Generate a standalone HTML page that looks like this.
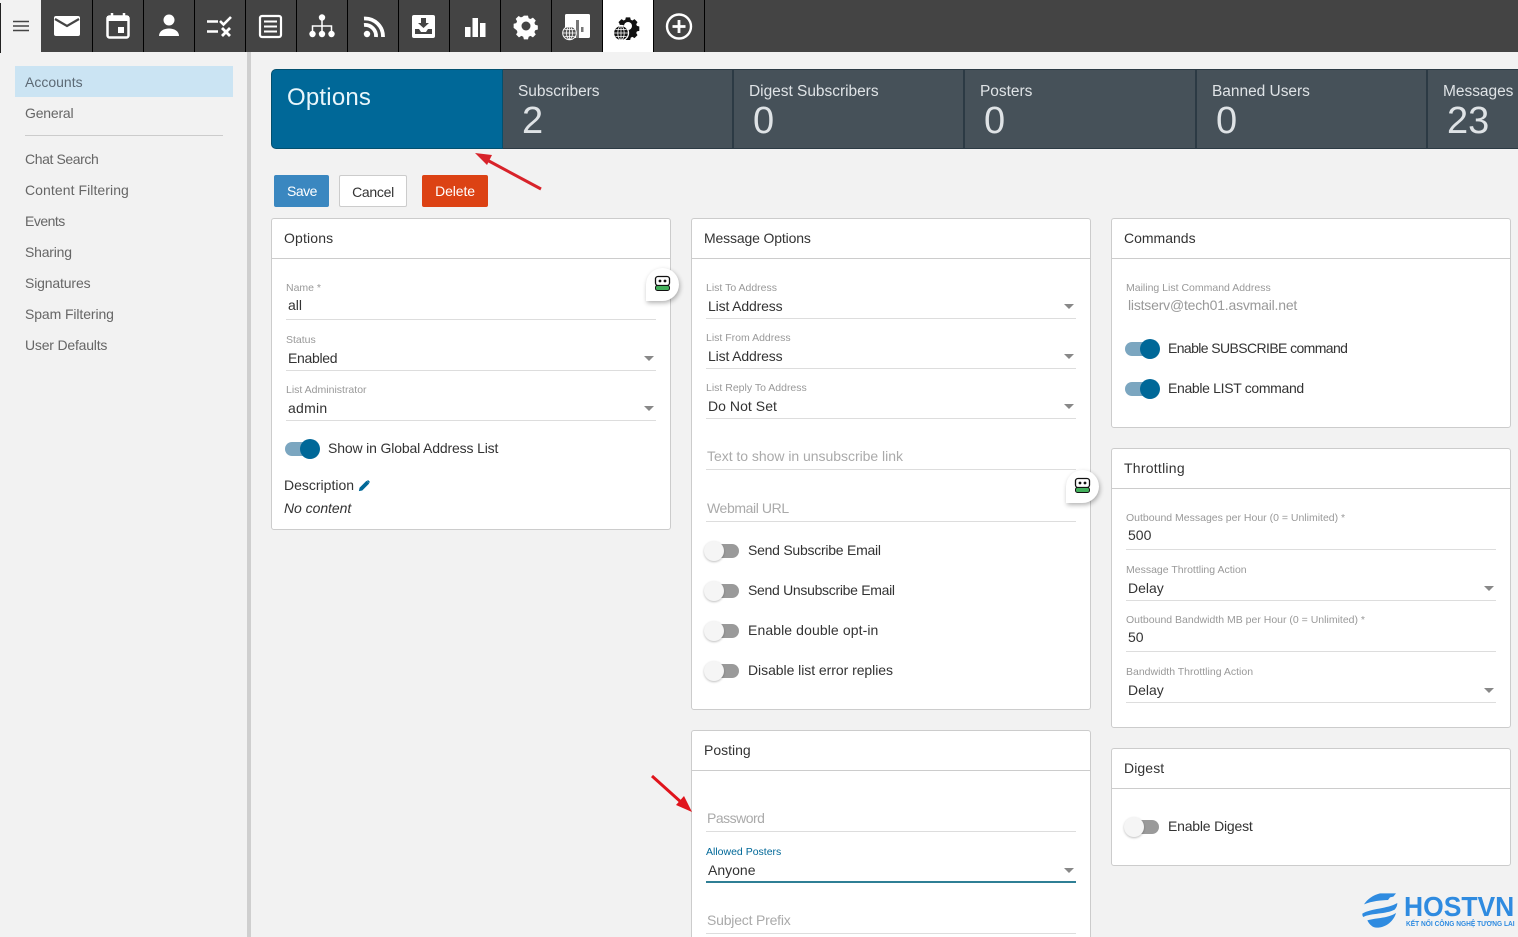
<!DOCTYPE html>
<html><head><meta charset="utf-8"><title>Options</title>
<style>
html,body{margin:0;padding:0;width:1518px;height:937px;overflow:hidden}
body{position:relative;background:#f2f2f2;font-family:"Liberation Sans",sans-serif;font-size:14px;color:#333}
#w{position:absolute;left:0;top:0;width:1518px;height:937px;overflow:hidden}
.a{position:absolute}
.t{position:absolute;white-space:nowrap;line-height:20px}
.nc{position:absolute;top:0;width:50px;height:52px;border-right:1px solid #000}
.nc svg{position:absolute;left:8px;top:9px}
.side{color:#666}
.tile{position:absolute;top:69px;height:78px;background:#465159;border:1px solid #2c3a44;border-width:1px 2px 1px 0}
.tl{position:absolute;left:15px;top:12px;font-size:15.500px;line-height:20px;color:#dfe3e6;white-space:nowrap;letter-spacing:-.03px}
.tn{position:absolute;left:19px;top:29px;font-size:38px;line-height:44px;color:#dfe3e6;white-space:nowrap}
.card{position:absolute;background:#fff;border:1px solid #ccc;border-radius:3px;box-sizing:border-box}
.ch{position:absolute;left:0;right:0;top:0;height:40px;border-bottom:1px solid #ccc;box-sizing:border-box}
.lb{position:absolute;font-size:10.500px;line-height:14px;color:#999;white-space:nowrap}
.v{position:absolute;line-height:20px;white-space:nowrap;color:#333}
.ph{position:absolute;line-height:20px;white-space:nowrap;color:#aaa}
.ln{position:absolute;height:1px;background:#ddd}
.ar{position:absolute;width:0;height:0;border-left:5.500px solid transparent;border-right:5.500px solid transparent;border-top:5px solid #888}
.tg{position:absolute;width:34px;height:14px;border-radius:7px}
.tg i{position:absolute;top:-3px;width:20px;height:20px;border-radius:50%}
.on{background:#7ba6c0}.on i{left:15px;background:#006898}
.off{background:#9a9a9a}.off i{left:-1px;background:#f5f5f5;box-shadow:0 1px 2px rgba(0,0,0,.25)}
.bot{position:absolute;width:33px;height:33px;background:#fff;border-radius:50% 50% 50% 0;box-shadow:1px 2px 5px rgba(0,0,0,.3)}
.btn{position:absolute;top:175px;height:32px;line-height:32px;text-align:center;border-radius:2px;box-sizing:border-box}
</style></head><body><div id="w">

<!-- top nav -->
<div class="a" style="left:0;top:0;width:1518px;height:52px;background:#444"></div>
<div class="a" style="left:0;top:0;width:41px;height:52px;background:#f2f2f2"></div>
<div class="a" style="left:0;top:3px;width:1px;height:50px;background:#222"></div>
<svg class="a" style="left:13px;top:20px" width="16" height="12"><path d="M0 1.500h16M0 6h16M0 10.500h16" stroke="#444" stroke-width="1.600"/></svg>
<div class="nc" style="left:42px"><svg width="34" height="34" viewBox="0 0 34 34"><rect x="4" y="7" width="26" height="20" rx="2" fill="#fff"/><path d="M5 10l12 7 12-7" fill="none" stroke="#444" stroke-width="2.200"/></svg></div>
<div class="nc" style="left:93px"><svg width="34" height="34" viewBox="0 0 34 34"><rect x="6.500" y="7.500" width="21" height="21" rx="2" fill="none" stroke="#fff" stroke-width="2.500"/><rect x="6" y="7" width="22" height="5" fill="#fff"/><path d="M11 4v5M23 4v5" stroke="#fff" stroke-width="2.500"/><rect x="17" y="18" width="6" height="6" fill="#fff"/></svg></div>
<div class="nc" style="left:144px"><svg width="34" height="34" viewBox="0 0 34 34"><circle cx="17" cy="11" r="5.500" fill="#fff"/><path d="M7 27c0-5 5-7.500 10-7.500S27 22 27 27z" fill="#fff"/></svg></div>
<div class="nc" style="left:195px"><svg width="34" height="34" viewBox="0 0 34 34"><path d="M4 12.500h11M4 22.500h11" stroke="#fff" stroke-width="2.400"/><path d="M17 12l3.500 3.500L28 8" fill="none" stroke="#fff" stroke-width="2.600"/><path d="M19 19l8 8M27 19l-8 8" stroke="#fff" stroke-width="2.800"/></svg></div>
<div class="nc" style="left:246px"><svg width="34" height="34" viewBox="0 0 34 34"><rect x="6" y="7" width="21" height="21" rx="2" fill="none" stroke="#fff" stroke-width="2.200"/><path d="M10 12.500h13M10 17.500h13M10 22.500h13" stroke="#fff" stroke-width="2"/></svg></div>
<div class="nc" style="left:297px"><svg width="34" height="34" viewBox="0 0 34 34"><circle cx="17" cy="8.500" r="3.200" fill="#fff"/><path d="M17 11v6M7.500 22v-5h19v5M17 17v5" fill="none" stroke="#fff" stroke-width="1.500"/><circle cx="7.500" cy="25" r="3.200" fill="#fff"/><circle cx="17" cy="25" r="3.200" fill="#fff"/><circle cx="26.500" cy="25" r="3.200" fill="#fff"/></svg></div>
<div class="nc" style="left:348px"><svg width="34" height="34" viewBox="0 0 34 34"><circle cx="11" cy="25" r="3.200" fill="#fff"/><path d="M8 16a11 11 0 0 1 12 12" fill="none" stroke="#fff" stroke-width="3.800"/><path d="M8 9.500a18 18 0 0 1 19 18.500" fill="none" stroke="#fff" stroke-width="3.800"/></svg></div>
<div class="nc" style="left:399px"><svg width="34" height="34" viewBox="0 0 34 34"><rect x="5" y="6" width="23" height="23" rx="2" fill="#fff"/><path d="M8 20h4l2 3h5l2-3h4v5H8z" fill="#444"/><path d="M14 9h5v5h3l-5.500 5-5.500-5h3z" fill="#444"/></svg></div>
<div class="nc" style="left:450px"><svg width="34" height="34" viewBox="0 0 34 34"><rect x="7" y="18" width="5.500" height="10" fill="#fff"/><rect x="14.500" y="9" width="5.500" height="19" fill="#fff"/><rect x="22" y="14" width="5.500" height="14" fill="#fff"/></svg></div>
<div class="nc" style="left:501px"><svg width="34" height="34" viewBox="0 0 34 34"><path d="M14.500 5h5l.8 3.200 2.300 1 2.900-1.700 3.500 3.500-1.700 2.900 1 2.300 3.200.8v5l-3.200.8-1 2.300 1.700 2.900-3.500 3.500-2.900-1.700-2.300 1-.8 3.200h-5l-.8-3.200-2.300-1-2.900 1.700-3.500-3.500 1.700-2.900-1-2.300L2 20v-5l3.200-.8 1-2.300-1.700-2.900L8 5.500l2.900 1.700 2.300-1z" fill="#fff" transform="translate(3 2.500) scale(.82)"/><circle cx="17" cy="17" r="4.500" fill="#444"/></svg></div>

<!-- report + globe icon, page coordinates -->
<div class="nc" style="left:552px"></div>
<svg class="a" style="left:0;top:0" width="700" height="52">
<rect x="565" y="14" width="25" height="24" rx="1.500" fill="#fff"/>
<path d="M576 20h3v18h-3zM581 27h2.500v5H581z" fill="#777"/>
<circle cx="569.500" cy="33" r="6.800" fill="#555" stroke="#fff" stroke-width="1"/>
<path d="M563 33h13M569.500 26.500v13M564.500 29.500h10M564.500 36.500h10" stroke="#fff" stroke-width=".8"/>
<ellipse cx="569.500" cy="33" rx="3" ry="6.500" fill="none" stroke="#fff" stroke-width=".8"/>
</svg>

<div class="nc" style="left:603px;background:#fff"></div>
<svg class="a" style="left:603px;top:0" width="50" height="52" viewBox="603 0 50 52">
<g transform="translate(628 26)"><path d="M-3-12h6l.8 3.300 2.300 1 2.900-1.800 4.200 4.200-1.800 2.900 1 2.300 3.300.8v6l-3.300.8-1 2.300 1.800 2.900-4.200 4.200-2.900-1.800-2.300 1-.8 3.300h-6l-.8-3.300-2.300-1-2.900 1.800-4.200-4.200 1.800-2.900-1-2.300-3.300-.8v-6l3.300-.8 1-2.300-1.800-2.900 4.200-4.200 2.900 1.800 2.300-1z" fill="#111" transform="scale(.72)"/><circle r="4" fill="#fff"/></g>
<circle cx="621" cy="33" r="7.500" fill="#111" stroke="#fff" stroke-width="1.300"/>
<path d="M614 33h14M621 26v14M615.500 29.500h11M615.500 36.500h11" stroke="#fff" stroke-width=".8"/>
<ellipse cx="621" cy="33" rx="3.200" ry="7" fill="none" stroke="#fff" stroke-width=".8"/>
</svg>
<div class="nc" style="left:654px"><svg width="34" height="34" viewBox="0 0 34 34"><circle cx="17" cy="17.500" r="12" fill="none" stroke="#fff" stroke-width="2.400"/><path d="M17 11v13M10.500 17.500h13" stroke="#fff" stroke-width="2.800"/></svg></div>

<!-- sidebar -->
<div class="a" style="left:247px;top:52px;width:4px;height:885px;background:#cfcfcf"></div>
<div class="a" style="left:15px;top:66px;width:218px;height:31px;background:#cbe4f3"></div>
<div class="t side" style="left:25px;top:72px;color:#5d6a75">Accounts</div>
<div class="t side" style="left:25px;top:103px;letter-spacing:-.2px">General</div>
<div class="a" style="left:25px;top:135px;width:198px;height:1px;background:#ccc"></div>
<div class="t side" style="left:25px;top:149px;letter-spacing:-.4px">Chat Search</div>
<div class="t side" style="left:25px;top:180px;letter-spacing:.07px">Content Filtering</div>
<div class="t side" style="left:25px;top:211px;letter-spacing:-.5px">Events</div>
<div class="t side" style="left:25px;top:242px;letter-spacing:-.2px">Sharing</div>
<div class="t side" style="left:25px;top:273px;letter-spacing:-.15px">Signatures</div>
<div class="t side" style="left:25px;top:304px;letter-spacing:-.1px">Spam Filtering</div>
<div class="t side" style="left:25px;top:335px;letter-spacing:-.2px">User Defaults</div>

<!-- tiles -->
<div class="tile" style="left:271px;width:230px;background:#006898;border-color:#02506f;border-left-width:1px;border-radius:5px 0 0 5px"><div style="position:absolute;left:15px;top:12px;font-size:24px;line-height:32px;color:#e9f6fb;letter-spacing:.2px">Options</div></div>
<div class="tile" style="left:503px;width:229px"><div class="tl">Subscribers</div><div class="tn">2</div></div>
<div class="tile" style="left:734px;width:229px"><div class="tl">Digest Subscribers</div><div class="tn">0</div></div>
<div class="tile" style="left:965px;width:230px"><div class="tl">Posters</div><div class="tn">0</div></div>
<div class="tile" style="left:1197px;width:229px"><div class="tl">Banned Users</div><div class="tn">0</div></div>
<div class="tile" style="left:1428px;width:90px;border-right:0"><div class="tl">Messages</div><div class="tn">23</div></div>

<!-- arrows -->
<svg class="a" style="left:0;top:0;z-index:5" width="1518" height="937"><path d="M541 189L487 160" stroke="#d8232a" stroke-width="3"/><path d="M475 153l17 2-5 10z" fill="#d8232a"/><path d="M652 776L682 803" stroke="#e0141c" stroke-width="3"/><path d="M692 812l-16-7 8-9z" fill="#e0141c"/></svg>

<!-- buttons -->
<div class="btn" style="left:274px;width:55px;background:#3a87c0;color:#fff;letter-spacing:-.5px;padding-left:1px">Save</div>
<div class="btn" style="left:339px;width:68px;background:#fff;border:1px solid #ccc;color:#333;letter-spacing:-.3px">Cancel</div>
<div class="btn" style="left:422px;width:66px;background:#dc4214;color:#fff;letter-spacing:-.1px">Delete</div>

<!-- Options card -->
<div class="card" style="left:271px;top:218px;width:400px;height:312px"><div class="ch"></div></div>
<div class="t" style="left:284px;top:228px;letter-spacing:.15px">Options</div>
<div class="lb" style="left:286px;top:281px">Name *</div><div class="v" style="left:288px;top:295px">all</div><div class="ln" style="left:286px;top:319px;width:370px"></div>
<div class="lb" style="left:286px;top:333px">Status</div><div class="v" style="left:288px;top:348px;letter-spacing:-.3px">Enabled</div><div class="ar" style="left:644px;top:356px"></div><div class="ln" style="left:286px;top:370px;width:370px"></div>
<div class="lb" style="left:286px;top:383px">List Administrator</div><div class="v" style="left:288px;top:398px;letter-spacing:.25px">admin</div><div class="ar" style="left:644px;top:406px"></div><div class="ln" style="left:286px;top:420px;width:370px"></div>
<div class="tg on" style="left:285px;top:442px"><i></i></div><div class="t" style="left:328px;top:438px;letter-spacing:-.15px">Show in Global Address List</div>
<div class="t" style="left:284px;top:475px">Description</div>
<svg class="a" style="left:358px;top:479px" width="13" height="13" viewBox="0 0 13 13"><path d="M1.500 11.500l.5-2.500L8.500 2.500l2 2L4 11z" fill="#006898" stroke="#006898"/><path d="M9.500 1.500l2 2" stroke="#006898" stroke-width="1.500"/></svg>
<div class="t" style="left:284px;top:498px;font-style:italic;letter-spacing:-.05px">No content</div>
<div class="bot" style="left:646px;top:268px"><svg width="33" height="33" style="position:absolute;left:0;top:0"><rect x="9.500" y="8.500" width="14" height="9" rx="2.500" fill="#fff" stroke="#111" stroke-width="1.300"/><circle cx="14" cy="13" r="1.400" fill="#111"/><circle cx="19" cy="13" r="1.400" fill="#111"/><rect x="9.500" y="17.500" width="14" height="5" rx="2" fill="#43b05c" stroke="#111" stroke-width="1"/></svg></div>

<!-- Message Options card -->
<div class="card" style="left:691px;top:218px;width:400px;height:492px"><div class="ch"></div></div>
<div class="t" style="left:704px;top:228px;letter-spacing:-.15px">Message Options</div>
<div class="lb" style="left:706px;top:281px">List To Address</div><div class="v" style="left:708px;top:296px;letter-spacing:-.15px">List Address</div><div class="ar" style="left:1064px;top:304px"></div><div class="ln" style="left:706px;top:318px;width:370px"></div>
<div class="lb" style="left:706px;top:331px">List From Address</div><div class="v" style="left:708px;top:346px;letter-spacing:-.15px">List Address</div><div class="ar" style="left:1064px;top:354px"></div><div class="ln" style="left:706px;top:368px;width:370px"></div>
<div class="lb" style="left:706px;top:381px">List Reply To Address</div><div class="v" style="left:708px;top:396px;letter-spacing:.05px">Do Not Set</div><div class="ar" style="left:1064px;top:404px"></div><div class="ln" style="left:706px;top:418px;width:370px"></div>
<div class="ph" style="left:707px;top:446px;letter-spacing:-.03px">Text to show in unsubscribe link</div><div class="ln" style="left:706px;top:469px;width:370px"></div>
<div class="ph" style="left:707px;top:498px;letter-spacing:-.4px">Webmail URL</div><div class="ln" style="left:706px;top:521px;width:370px"></div>
<div class="tg off" style="left:705px;top:544px"><i></i></div><div class="t" style="left:748px;top:540px;letter-spacing:-.25px">Send Subscribe Email</div>
<div class="tg off" style="left:705px;top:584px"><i></i></div><div class="t" style="left:748px;top:580px;letter-spacing:-.3px">Send Unsubscribe Email</div>
<div class="tg off" style="left:705px;top:624px"><i></i></div><div class="t" style="left:748px;top:620px;letter-spacing:.1px">Enable double opt-in</div>
<div class="tg off" style="left:705px;top:664px"><i></i></div><div class="t" style="left:748px;top:660px;letter-spacing:-.05px">Disable list error replies</div>
<div class="bot" style="left:1066px;top:470px"><svg width="33" height="33" style="position:absolute;left:0;top:0"><rect x="9.500" y="8.500" width="14" height="9" rx="2.500" fill="#fff" stroke="#111" stroke-width="1.300"/><circle cx="14" cy="13" r="1.400" fill="#111"/><circle cx="19" cy="13" r="1.400" fill="#111"/><rect x="9.500" y="17.500" width="14" height="5" rx="2" fill="#43b05c" stroke="#111" stroke-width="1"/></svg></div>

<!-- Posting card -->
<div class="card" style="left:691px;top:730px;width:400px;height:220px"><div class="ch"></div></div>
<div class="t" style="left:704px;top:740px">Posting</div>
<div class="ph" style="left:707px;top:808px;letter-spacing:-.5px">Password</div><div class="ln" style="left:706px;top:831px;width:370px"></div>
<div class="lb" style="left:706px;top:845px;color:#006898">Allowed Posters</div><div class="v" style="left:708px;top:860px">Anyone</div><div class="ar" style="left:1064px;top:868px"></div><div class="ln" style="left:706px;top:881px;width:370px;height:2px;background:#2f7f95"></div>
<div class="ph" style="left:707px;top:910px;letter-spacing:-.2px">Subject Prefix</div><div class="ln" style="left:706px;top:933px;width:370px"></div>

<!-- Commands card -->
<div class="card" style="left:1111px;top:218px;width:400px;height:210px"><div class="ch"></div></div>
<div class="t" style="left:1124px;top:228px">Commands</div>
<div class="lb" style="left:1126px;top:281px">Mailing List Command Address</div><div class="v" style="left:1128px;top:295px;color:#999;letter-spacing:-.2px">listserv@tech01.asvmail.net</div>
<div class="tg on" style="left:1125px;top:342px"><i></i></div><div class="t" style="left:1168px;top:338px;letter-spacing:-.6px">Enable SUBSCRIBE command</div>
<div class="tg on" style="left:1125px;top:382px"><i></i></div><div class="t" style="left:1168px;top:378px;letter-spacing:-.33px">Enable LIST command</div>

<!-- Throttling card -->
<div class="card" style="left:1111px;top:448px;width:400px;height:280px"><div class="ch"></div></div>
<div class="t" style="left:1124px;top:458px;letter-spacing:.25px">Throttling</div>
<div class="lb" style="left:1126px;top:511px">Outbound Messages per Hour (0 = Unlimited) *</div><div class="v" style="left:1128px;top:525px">500</div><div class="ln" style="left:1126px;top:549px;width:370px"></div>
<div class="lb" style="left:1126px;top:563px">Message Throttling Action</div><div class="v" style="left:1128px;top:578px">Delay</div><div class="ar" style="left:1484px;top:586px"></div><div class="ln" style="left:1126px;top:600px;width:370px"></div>
<div class="lb" style="left:1126px;top:613px">Outbound Bandwidth MB per Hour (0 = Unlimited) *</div><div class="v" style="left:1128px;top:627px">50</div><div class="ln" style="left:1126px;top:651px;width:370px"></div>
<div class="lb" style="left:1126px;top:665px">Bandwidth Throttling Action</div><div class="v" style="left:1128px;top:680px">Delay</div><div class="ar" style="left:1484px;top:688px"></div><div class="ln" style="left:1126px;top:702px;width:370px"></div>

<!-- Digest card -->
<div class="card" style="left:1111px;top:748px;width:400px;height:118px"><div class="ch"></div></div>
<div class="t" style="left:1124px;top:758px;letter-spacing:.1px">Digest</div>
<div class="tg off" style="left:1125px;top:820px"><i></i></div><div class="t" style="left:1168px;top:816px;letter-spacing:-.2px">Enable Digest</div>

<!-- HOSTVN logo -->
<svg class="a" style="left:1354px;top:885px" width="60" height="50" viewBox="0 0 180 150"><path d="M30 58C40 42 58 30 78 25l48 0-8 10-10 2-6 8C80 46 55 48 30 58z" fill="#2f8be0"/><path d="M25 86C50 70 100 72 130 54c0 8-3 14-8 20-26 14-70 10-94 22-3-3-3-6-3-10z" fill="#2f8be0"/><path d="M40 106c30-8 62-6 86-22-6 22-28 44-58 44-12 0-22-10-28-22z" fill="#2f8be0"/></svg>
<div class="a" style="left:1404px;top:891px;font-size:28px;line-height:32px;font-weight:bold;color:#2f8be0;white-space:nowrap;transform-origin:0 0;transform:scaleX(.945)">HOSTVN</div>
<div class="a" style="left:1406px;top:919px;font-size:7.500px;line-height:10px;font-weight:bold;color:#2f8be0;white-space:nowrap;transform-origin:0 0;transform:scaleX(.88)">KẾT NỐI CÔNG NGHỆ TƯƠNG LAI</div>
</div></body></html>
